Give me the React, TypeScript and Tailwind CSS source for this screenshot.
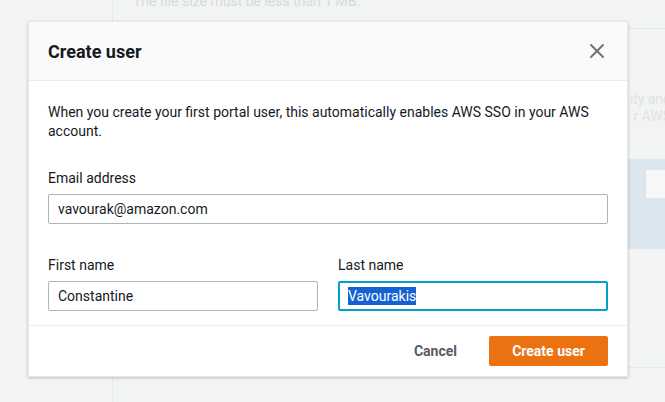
import { X } from "lucide-react";

// ── 배경 페이지 (모달 뒤) ─────────────────────────────
function BackgroundPage() {
  return (
    <div className="flex h-[402px] w-[665px] overflow-hidden bg-[#f2f3f3]">
      <div className="w-[113px] shrink-0 border-r border-[#e6e9e9]" />
      <div className="flex-1 flex flex-col">
        <p className="mt-[-8px] pl-5 text-[14px] leading-[19px] text-[#d5dbdb]">
          The file size must be less than 1 MB.
        </p>
        <div className="mt-[17px] h-[340px] border-y border-[#e6e9e9] flex flex-col">
          <div className="mt-[62px] flex flex-col items-end mr-[-6px] text-[14px] leading-[17px] text-[#dfe3e3]">
            <span className="whitespace-nowrap">ity and</span>
            <span className="whitespace-nowrap">r AWS</span>
          </div>
          <div className="mt-[34px] h-[90px] bg-[#dbe6ee] flex justify-end pt-[11px]">
            <div className="w-[19px] h-[28px] bg-[#f5f7f8]" />
          </div>
        </div>
      </div>
    </div>
  );
}

function Field({
  label,
  value,
  focused,
}: {
  label: string;
  value: string;
  focused?: boolean;
}) {
  return (
    <div className="flex flex-col gap-[6px]">
      <label className="text-[14px] leading-[19px] text-[#16191f]">{label}</label>
      {focused ? (
        <div className="h-[30px] rounded-[2px] border-2 border-[#00a1c9] flex items-center px-[8px]">
          <span className="bg-[#1463d1] text-white text-[14px] leading-[18px]">
            {value}
          </span>
        </div>
      ) : (
        <div className="h-[30px] rounded-[2px] border border-[#aab7b8] flex items-center px-[9px] text-[14px] text-[#16191f]">
          {value}
        </div>
      )}
    </div>
  );
}

export default function App() {
  return (
    <div
      className="relative w-[665px] h-[402px] overflow-hidden"
      style={{ fontFamily: "Roboto, 'Liberation Sans', sans-serif" }}
    >
      <BackgroundPage />

      <div className="absolute left-[28px] top-[21px] w-[600px] bg-white rounded-[1px] shadow-[0_1px_3px_rgba(0,28,36,0.25)] border border-[#e6e9e9]">
        <div className="h-[59px] bg-[#fafafa] border-b border-[#eaeded] flex items-center justify-between pl-[19px] pr-[18px]">
          <h2 className="text-[18px] font-bold text-[#16191f]">Create user</h2>
          <X size={24} strokeWidth={1.8} className="text-[#687078]" />
        </div>

        <div className="px-[19px] pt-[22px] pb-[14px] border-b border-[#eaeded]">
          <p className="text-[14px] leading-[19px] text-[#16191f]">
            When you create your first portal user, this automatically enables AWS SSO in your AWS
            account.
          </p>
          <div className="mt-[28px]">
            <Field label="Email address" value="vavourak@amazon.com" />
          </div>
          <div className="mt-[32px] grid grid-cols-2 gap-5">
            <Field label="First name" value="Constantine" />
            <Field label="Last name" value="Vavourakis" focused />
          </div>
        </div>

        <div className="h-[50px] flex items-center justify-end gap-8 pr-[19px]">
          <button className="text-[14px] font-bold text-[#545b64]">Cancel</button>
          <button className="h-[30px] w-[119px] rounded-[2px] bg-[#ec7211] text-white text-[14px] font-bold">
            Create user
          </button>
        </div>
      </div>
    </div>
  );
}
